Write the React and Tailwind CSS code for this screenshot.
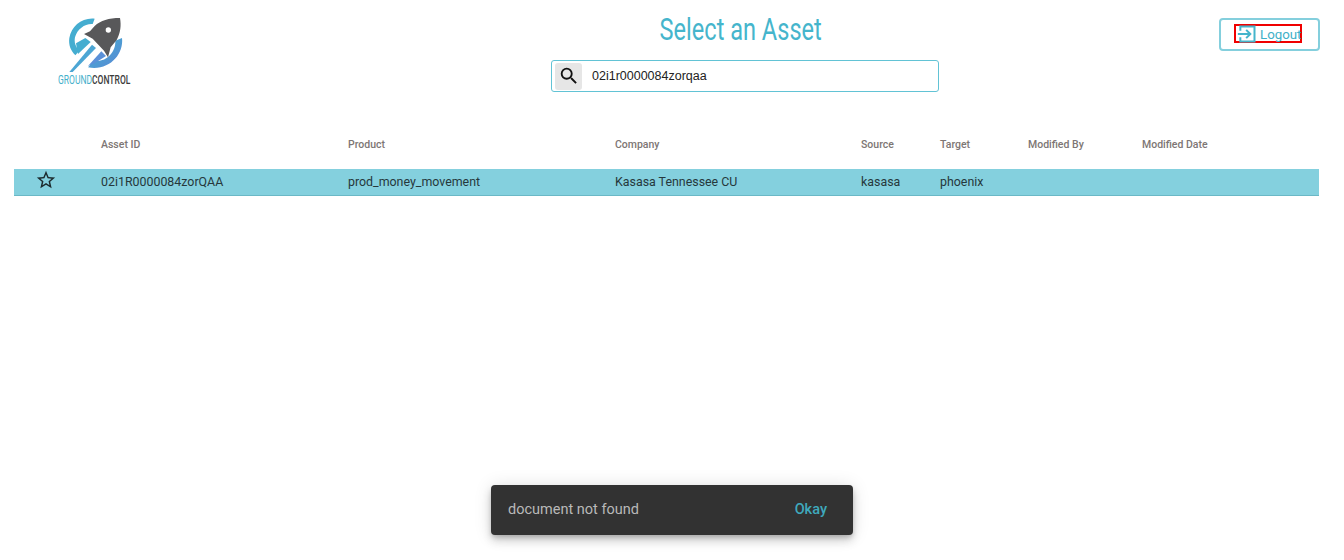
import React from "react";

const cols = "grid grid-cols-[87px_247px_267px_246px_79px_88px_114px_1fr]";

function Logo() {
  return (
    <div className="w-[90px] h-[90px] flex flex-col">
      <svg viewBox="0 0 210 186" className="w-[70px] h-[62px] block ml-[2px]">
        <defs>
          <linearGradient id="g" x1="0" y1="0" x2="1" y2="1">
            <stop offset="0" stopColor="#3fb3cf" />
            <stop offset="1" stopColor="#5b86d6" />
          </linearGradient>
        </defs>
        <path d="M104 26 C66 22 34 48 28 84 C25 104 32 122 46 136 L58 122 C46 110 42 96 45 82 C52 56 76 40 98 42 Z" fill="#45add0" />
        <path d="M48 100 L76 84 L92 96 L54 132 Z" fill="#45add0" />
        <path d="M186 84 C192 134 146 184 84 172 L102 152 C136 158 168 128 166 92 Z" fill="url(#g)" />
        <path d="M28 186 L96 104 L108 114 L38 186 Z" fill="#4ca6d4" />
        <path d="M84 168 L124 124 L138 138 L104 160 Z" fill="#5a90d8" />
        <path d="M180 24 C146 24 122 32 104 48 L90 64 L72 72 L98 86 L132 122 L144 142 L152 112 L170 90 C182 68 184 46 180 24 Z" fill="#58585a" />
        <circle cx="145" cy="60" r="8" fill="#ffffff" />
      </svg>
      <div className="text-[12.5px] leading-[14px] font-normal whitespace-nowrap origin-left scale-x-[0.68] mt-[1px]">
        <span className="text-[#45b0cb]">GROUND</span>
        <span className="text-[#3c3c3c] font-medium">CONTROL</span>
      </div>
    </div>
  );
}

export default function App() {
  const headers = ["", "Asset ID", "Product", "Company", "Source", "Target", "Modified By", "Modified Date"];
  const row = ["02i1R0000084zorQAA", "prod_money_movement", "Kasasa Tennessee CU", "kasasa", "phoenix", "", ""];
  return (
    <div className="relative h-[560px] w-[1344px] bg-white overflow-hidden font-['Roboto',sans-serif]">
      <div className="flex items-start h-[127px]">
        <div className="w-[551px] pl-[58px] pt-[10px] shrink-0">
          <Logo />
        </div>
        <div className="w-[388px] shrink-0 flex flex-col items-center">
          <h1 className="mt-[11px] h-[38px] text-[31px] leading-[38px] font-normal text-[#45b5cc] scale-x-[0.76] whitespace-nowrap -translate-x-[4px]">
            Select an Asset
          </h1>
          <div className="mt-[11px] w-[388px] h-[32px] rounded-[3px] border border-[#62c3d5] flex items-center pl-[3px]">
            <div className="w-[27px] h-[27px] rounded-[3px] bg-[#e6e6e6] flex items-center justify-center">
              <svg viewBox="0 0 24 24" className="w-[22px] h-[22px]" fill="#111">
                <path d="M15.5 14h-.79l-.28-.27A6.471 6.471 0 0 0 16 9.5 6.5 6.5 0 1 0 9.5 16c1.61 0 3.09-.59 4.23-1.57l.27.28v.79l5 4.99L20.49 19l-4.99-5zm-6 0C7.01 14 5 11.99 5 9.5S7.01 5 9.5 5 14 7.01 14 9.5 11.99 14 9.5 14z" />
              </svg>
            </div>
            <span className="ml-[10px] font-['Liberation_Sans',sans-serif] text-[12.5px] text-[#222]">02i1r0000084zorqaa</span>
          </div>
        </div>
        <div className="flex-1 flex justify-end pr-[24px] pt-[18px]">
          <div className="w-[101px] h-[33px] rounded-[4px] border-2 border-[#84cfdd] flex items-center pl-[13px]">
            <div className="h-[19px] w-[68px] border-2 border-[#f00000] flex items-center text-[#3fb0c8] text-[13.3px] shrink-0 -mt-[2px]">
              <svg viewBox="0 0 24 24" className="w-[20px] h-[20px] shrink-0 ml-[1px]" fill="none" stroke="#45b5cc" strokeWidth="2.4">
                <path d="M4 8V3h17v18H4v-5" />
                <path d="M1 12h15M11 7l5 5-5 5" />
              </svg>
              <span className="ml-[3px] mt-[1px] leading-[15px]">Logout</span>
            </div>
          </div>
        </div>
      </div>

      <div className="ml-[14px] mr-[25px]">
        <div className={`${cols} h-[42px] pb-[6px] items-center text-[10.5px] font-medium text-[#7d7674]`}>
          {headers.map((h, i) => (
            <div key={i}>{h}</div>
          ))}
        </div>
        <div className={`${cols} h-[27px] items-center bg-[#84d0de] border-b border-[#6bb8c6] text-[12.4px] text-[#26383c]`}>
          <div className="flex justify-center pr-[23px]">
            <svg viewBox="0 0 24 24" className="w-[22px] h-[22px] -mt-[5px]" fill="#1c2b2e">
              <path d="M22 9.24l-7.19-.62L12 2 9.19 8.63 2 9.24l5.46 4.73L5.82 21 12 17.27 18.18 21l-1.63-7.03L22 9.24zM12 15.4l-3.76 2.27 1-4.28-3.32-2.88 4.38-.38L12 6.1l1.71 4.04 4.38.38-3.32 2.88 1 4.28L12 15.4z" />
            </svg>
          </div>
          {row.map((c, i) => (
            <div key={i}>{c}</div>
          ))}
        </div>
      </div>

      <div className="absolute left-[491px] top-[485px] w-[362px] h-[50px] rounded-[4px] bg-[#323232] shadow-[0_3px_5px_-1px_rgba(0,0,0,0.2),0_6px_10px_0_rgba(0,0,0,0.14),0_1px_18px_0_rgba(0,0,0,0.12)] flex items-center justify-between pl-[17px] pr-[26px]">
        <span className="text-[14.5px] text-[#b9b9b9]">document not found</span>
        <span className="text-[14.5px] font-medium text-[#3fa9bd]">Okay</span>
      </div>
    </div>
  );
}
